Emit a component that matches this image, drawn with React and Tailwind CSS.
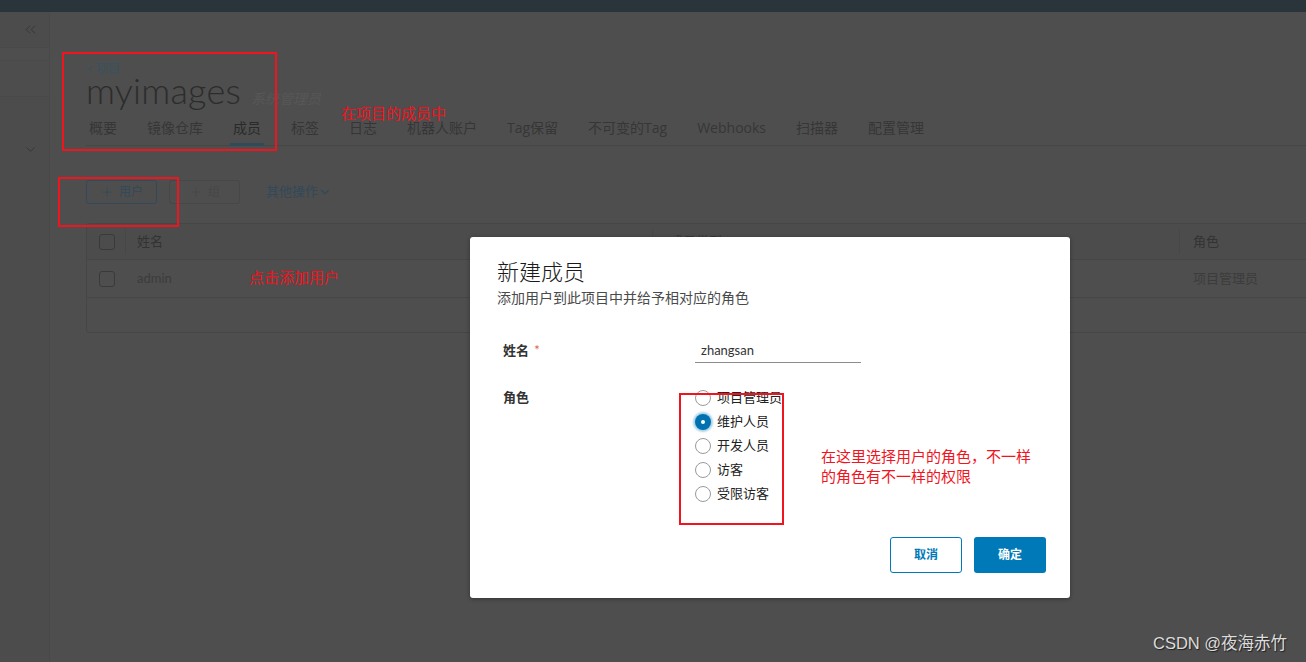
import { ChevronsLeft, ChevronDown, Plus } from "lucide-react";

const tabs = ["概要", "镜像仓库", "成员", "标签", "日志", "机器人账户", "Tag保留", "不可变的Tag", "Webhooks", "扫描器", "配置管理"];
const roles = ["项目管理员", "维护人员", "开发人员", "访客", "受限访客"];

const Checkbox = () => <div className="w-[16px] h-[16px] rounded-[3px] border border-[#3a3a3a]"></div>;

const App = () => {
  return (
    <div className="relative w-[1306px] h-[662px] overflow-hidden bg-[#4e4e4e] font-[Lato,'Noto_Sans_CJK_SC',sans-serif]">
      <div className="h-[12px] bg-[#2a343b]"></div>
      <div className="flex h-[650px]">
        {/* sidebar */}
        <div className="w-[50px] shrink-0 bg-[#4c4c4c] border-r border-[#494949]">
          <div className="h-[36px] flex items-center justify-end pr-[10px] border-b border-[#494949] text-[#333]">
            <ChevronsLeft size={17} strokeWidth={1.2} />
          </div>
          <div className="h-[12px] bg-[#4e4e4e]"></div>
          <div className="h-[37px] bg-[#4d4d4d] border-y border-[#494949]"></div>
          <div className="h-[45px]"></div>
          <div className="flex justify-end pr-[11px] text-[#333]">
            <ChevronDown size={15} strokeWidth={1.3} />
          </div>
        </div>

        {/* main */}
        <div className="flex-1 overflow-hidden pl-[36px] pt-[50px]">
          <div className="text-[12px] leading-[14px] text-[#37535f]">&lt; 项目</div>
          <div className="flex items-baseline">
            <div className="text-[36px] leading-[29px] font-light text-[#2c2c2c] tracking-[0.2px]">myimages</div>
            <div className="ml-[10px] text-[14px] leading-[18px] italic text-[#575757]">系统管理员</div>
          </div>
          <div className="flex gap-[24px] mt-[4px] w-[1300px] border-b border-[#464646] text-[14px] font-['Open_Sans','Noto_Sans_CJK_SC',sans-serif]">
            {tabs.map((t) => (
              <div
                key={t}
                className={`px-[3px] h-[34px] pt-[8px] leading-[16px] -mb-px border-b-[3px] ${t === "成员" ? "border-[#2f4a58] text-[#2a2a2a]" : "border-transparent text-[#363636]"}`}
              >
                {t}
              </div>
            ))}
          </div>

          <div className="flex items-center mt-[34px] h-[24px]">
            <div className="w-[71px] h-[24px] rounded-[3px] border border-[#31495a] text-[#31495a] text-[12px] flex items-center justify-center gap-[5px]">
              <Plus size={14} strokeWidth={1.5} />
              <span>用户</span>
            </div>
            <div className="ml-[12px] w-[71px] h-[24px] rounded-[3px] border border-[#474747] text-[#474747] text-[12px] flex items-center justify-center gap-[5px]">
              <Plus size={14} strokeWidth={1.5} />
              <span>组</span>
            </div>
            <div className="ml-[26px] flex items-center text-[13px] text-[#31495a]">
              其他操作
              <ChevronDown size={14} strokeWidth={2} />
            </div>
          </div>

          <div className="mt-[19px] w-[1250px] rounded-[3px] border border-[#464646] text-[13px]">
            <div className="flex h-[36px] items-center bg-[#4c4c4c] border-b border-[#464646] text-[#333]">
              <div className="w-[38px] pl-[12px]"><Checkbox /></div>
              <div className="w-[527px] border-l border-[#474747] h-[25px] flex items-center pl-[11px]">姓名</div>
              <div className="w-[527px] border-l border-[#474747] h-[25px] flex items-center pl-[17px]">成员类型</div>
              <div className="flex-1 border-l border-[#474747] h-[25px] flex items-center pl-[13px]">角色</div>
            </div>
            <div className="flex h-[38px] items-center border-b border-[#464646] text-[#3c3c3c]">
              <div className="w-[38px] pl-[12px]"><Checkbox /></div>
              <div className="w-[527px] pl-[12px]">admin</div>
              <div className="w-[527px] pl-[18px]">用户</div>
              <div className="flex-1 pl-[14px]">项目管理员</div>
            </div>
            <div className="h-[34px]"></div>
          </div>
        </div>
      </div>

      {/* annotations on the page */}
      <div className="absolute left-[62px] top-[52px] w-[215px] h-[99px] border-2 border-[#f0141e]"></div>
      <div className="absolute left-[58px] top-[177px] w-[121px] h-[50px] border-2 border-[#f0141e]"></div>
      <div className="absolute left-[341px] top-[106px] text-[15px] leading-[14px] text-[#f0141e]">在项目的成员中</div>
      <div className="absolute left-[249px] top-[267px] text-[15px] leading-[20px] text-[#f0141e]">点击添加用户</div>

      {/* modal */}
      <div className="absolute left-[470px] top-[237px] w-[600px] h-[361px] bg-white rounded-[3px] shadow-[0_1px_4px_rgba(0,0,0,0.35)] pt-[21px]">
        <div className="pl-[27px] text-[22px] leading-[28px] font-light text-[#1a1a1a]">新建成员</div>
        <div className="pl-[27px] mt-[2px] text-[14px] leading-[20px] text-[#4a4a4a]">添加用户到此项目中并给予相对应的角色</div>

        <div className="flex items-center h-[24px] mt-[31px] pl-[33px]">
          <div className="w-[192px] text-[13px] font-bold text-[#333]">
            姓名 <span className="text-[#e25c4b] font-normal ml-[2px]">*</span>
          </div>
          <div className="w-[166px] h-[24px] border-b border-[#8c8c8c] px-[6px] text-[13px] leading-[22px] text-[#333]">zhangsan</div>
        </div>

        <div className="flex mt-[23px] pl-[33px]">
          <div className="w-[192px] h-[24px] flex items-center text-[13px] font-bold text-[#333]">角色</div>
          <div className="flex flex-col">
            {roles.map((r) => (
              <div key={r} className="flex items-center h-[24px]">
                {r === "维护人员" ? (
                  <div className="w-[16px] h-[16px] rounded-full bg-[#0072b0] shadow-[0_0_2px_2px_rgba(0,121,184,0.35)] flex items-center justify-center">
                    <div className="w-[4px] h-[4px] rounded-full bg-white"></div>
                  </div>
                ) : (
                  <div className="w-[16px] h-[16px] rounded-full border border-[#9a9a9a] bg-white"></div>
                )}
                <span className="ml-[6px] text-[13px] text-[#222]">{r}</span>
              </div>
            ))}
          </div>
        </div>

        <div className="flex justify-end gap-[12px] pr-[24px] mt-[31px]">
          <div className="w-[72px] h-[36px] rounded-[3px] border border-[#0079b8] text-[#0079b8] text-[12px] font-bold flex items-center justify-center">取消</div>
          <div className="w-[72px] h-[36px] rounded-[3px] bg-[#0079b8] text-white text-[12px] font-bold flex items-center justify-center">确定</div>
        </div>
      </div>

      {/* annotations on the modal */}
      <div className="absolute left-[679px] top-[393px] w-[105px] h-[132px] border-2 border-[#f0141e]"></div>
      <div className="absolute left-[821px] top-[446px] text-[15px] leading-[20px] text-[#f0141e]">
        <div>在这里选择用户的角色，不一样</div>
        <div>的角色有不一样的权限</div>
      </div>

      <div className="absolute left-[1153px] top-[632px] text-[16.5px] leading-[22px] text-[#dcdcdc] font-['Liberation_Sans','Noto_Sans_CJK_SC',sans-serif] [text-shadow:1px_1px_1px_rgba(0,0,0,0.6)]">
        CSDN @夜海赤竹
      </div>
    </div>
  );
};

export default App;
